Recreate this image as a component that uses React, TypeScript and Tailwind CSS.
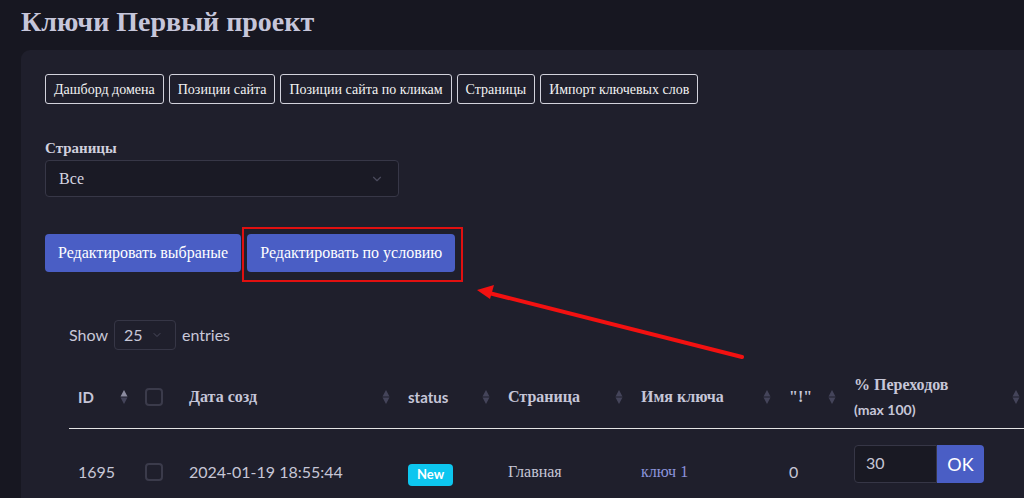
import { ChevronDown } from 'lucide-react';

function SortIcon({ active = false }: { active?: boolean }) {
  return (
    <svg width="8" height="16" viewBox="0 0 8 16" className="shrink-0">
      <path d="M4 1 L7.5 7.5 L0.5 7.5 Z" fill={active ? '#8c8ca0' : '#44445a'} />
      <path d="M4 15 L7.5 8.5 L0.5 8.5 Z" fill="#44445a" />
    </svg>
  );
}

function Checkbox() {
  return <span className="block w-[18px] h-[18px] rounded-[4px] border-2 border-[#3b3b4b]" />;
}

const tabs = ['Дашборд домена', 'Позиции сайта', 'Позиции сайта по кликам', 'Страницы', 'Импорт ключевых слов'];

const cols = 'grid grid-cols-[68px_43px_219px_100px_133px_148px_65px_185px]';
const serif = "font-['Liberation_Serif',serif]";
const sans = "font-['Lato',sans-serif]";

export default function App() {
  return (
    <div className="w-[1024px] h-[498px] overflow-hidden bg-[#171721] pl-[21px]">
      <h1 className={`h-[50px] leading-[44px] text-[28px] font-bold text-[#c6c6da] ${serif}`}>
        Ключи Первый проект
      </h1>

      <div className="relative w-[1040px] min-h-[460px] rounded-[9px] bg-[#1f1f2c] pl-[24px] pt-[24px]">
        <div className="flex gap-[5px]">
          {tabs.map((t) => (
            <button
              key={t}
              className={`h-[30px] px-[8px] rounded-[3px] border border-[#d2d2dc] text-[14px] text-[#f2f2f2] ${serif}`}
            >
              {t}
            </button>
          ))}
        </div>

        <div className={`mt-[34px] text-[15px] font-bold leading-[20px] text-[#d0d0de] ${serif}`}>
          Страницы
        </div>
        <div className="mt-[2px] w-[354px] h-[37px] rounded-[4px] border border-[#373747] bg-[#1a1a25] flex items-center justify-between pl-[13px] pr-[14px]">
          <span className={`text-[16px] text-[#d4d4e0] ${serif}`}>Все</span>
          <ChevronDown size={14} className="text-[#4a4a5c]" />
        </div>

        <div className="mt-[37px] flex gap-[6px]">
          <button className={`h-[38px] px-[13px] rounded-[4px] bg-[#4a5ec5] text-[16px] text-white ${serif}`}>
            Редактировать выбраные
          </button>
          <div className="relative">
            <button className={`h-[38px] px-[13px] rounded-[4px] bg-[#4a5ec5] text-[16px] text-white ${serif}`}>
              Редактировать по условию
            </button>
            <span className="absolute -left-[5px] -top-[7px] -right-[8px] -bottom-[10px] border-2 border-[#e01010]" />
          </div>
        </div>

        <div className="pl-[24px]">
          <div className={`mt-[48px] flex items-center gap-[6px] text-[16px] text-[#c8c8d8] ${sans}`}>
            <span>Show</span>
            <div className="w-[62px] h-[30px] rounded-[4px] border border-[#363646] flex items-center justify-between pl-[9px] pr-[12px]">
              <span>25</span>
              <ChevronDown size={12} className="text-[#4a4a5c]" />
            </div>
            <span>entries</span>
          </div>

          <div className={`${cols} mt-[16px] h-[63px] items-center border-b border-[#e4e4e4] text-[16px] font-bold text-[#c6c6d8]`}>
            <div className={`flex items-center justify-between px-[9px] text-[15px] ${sans}`}>
              <span>ID</span>
              <SortIcon active />
            </div>
            <div className="pl-[8px]"><Checkbox /></div>
            <div className={`flex items-center justify-between px-[9px] ${serif}`}>
              <span>Дата созд</span>
              <SortIcon />
            </div>
            <div className={`flex items-center justify-between px-[9px] text-[15px] ${sans}`}>
              <span>status</span>
              <SortIcon />
            </div>
            <div className={`flex items-center justify-between px-[9px] ${serif}`}>
              <span>Страница</span>
              <SortIcon />
            </div>
            <div className={`flex items-center justify-between px-[9px] ${serif}`}>
              <span>Имя ключа</span>
              <SortIcon />
            </div>
            <div className={`flex items-center justify-between px-[9px] ${serif}`}>
              <span>"!"</span>
              <SortIcon />
            </div>
            <div className="flex items-center justify-between pl-[9px] pr-[10px]">
              <div className="leading-[25px]">
                <div className={serif}>% Переходов</div>
                <div className={`text-[14px] ${sans}`}>(max 100)</div>
              </div>
              <SortIcon />
            </div>
          </div>

          <div className={`${cols} items-start text-[16px] text-[#c6c6d6]`}>
            <div className={`pl-[9px] mt-[32px] leading-[22px] ${sans}`}>1695</div>
            <div className="pl-[8px] mt-[34px]"><Checkbox /></div>
            <div className={`pl-[9px] mt-[32px] leading-[22px] ${sans}`}>2024-01-19 18:55:44</div>
            <div className="pl-[9px] mt-[32px]">
              <span className={`inline-flex h-[22px] px-[9px] items-center rounded-[4px] bg-[#0dc6ef] text-[13px] font-bold text-white ${sans}`}>
                New
              </span>
            </div>
            <div className={`pl-[9px] mt-[32px] leading-[22px] ${serif}`}>Главная</div>
            <div className={`pl-[9px] mt-[32px] leading-[22px] text-[#8c94dc] ${serif}`}>ключ 1</div>
            <div className={`pl-[9px] mt-[32px] leading-[22px] ${sans}`}>0</div>
            <div className="pl-[9px] mt-[16px] flex">
              <div className={`w-[83px] h-[38px] rounded-l-[4px] border border-[#363646] bg-[#191923] pl-[11px] pt-[6px] leading-[22px] ${sans}`}>
                30
              </div>
              <button className={`w-[47px] h-[38px] rounded-r-[4px] bg-[#4a5ec5] text-[18px] text-white ${sans}`}>
                OK
              </button>
            </div>
          </div>
        </div>

        <svg className="absolute left-0 top-0 pointer-events-none" width="1040" height="460">
          <line x1="721" y1="307" x2="468" y2="243" stroke="#f21111" strokeWidth="4" strokeLinecap="round" />
          <path d="M456 240 L473 235 L469 249 Z" fill="#f21111" />
        </svg>
      </div>
    </div>
  );
}
